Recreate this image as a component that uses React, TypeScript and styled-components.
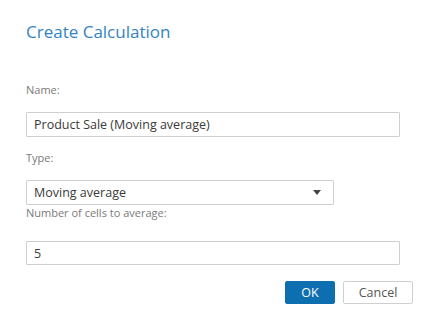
import React from "react";
import styled, { createGlobalStyle } from "styled-components";

const Global = createGlobalStyle`
  html, body { margin: 0; padding: 0; background: #fff; }
  body { font-family: "Open Sans", Lato, sans-serif; }
  * { box-sizing: border-box; }
`;

const Dialog = styled.div`
  width: 427px;
  height: 316px;
  padding: 22px 14px 0 26px;
  display: flex;
  flex-direction: column;
`;

const Title = styled.h1`
  margin: 0;
  font-size: 17px;
  line-height: 20px;
  font-weight: 400;
  color: #3483c4;
`;

const Label = styled.div<{ $top: number }>`
  margin-top: ${(p) => p.$top}px;
  font-size: 11px;
  line-height: 12px;
  color: #7a7a7a;
`;

const Field = styled.div<{ $top: number; $width: number; $height?: number }>`
  margin-top: ${(p) => p.$top}px;
  width: ${(p) => p.$width}px;
  height: ${(p) => p.$height ?? 25}px;
  flex: none;
  border: 1px solid #cfcfcf;
  border-radius: 1px;
  display: flex;
  align-items: center;
  justify-content: space-between;
  padding: 0 12px 0 7px;
  font-size: 12.5px;
  color: #3a3a3a;
`;

const Caret = styled.span`
  width: 0;
  height: 0;
  border-left: 4px solid transparent;
  border-right: 4px solid transparent;
  border-top: 5px solid #444;
`;

const Actions = styled.div`
  margin-top: 16px;
  display: flex;
  justify-content: flex-end;
  gap: 8px;
`;

const Button = styled.button<{ $primary?: boolean; $width: number }>`
  width: ${(p) => p.$width}px;
  height: 23px;
  font-family: inherit;
  font-size: 12.5px;
  padding: 0;
  border-radius: 2px;
  border: 1px solid ${(p) => (p.$primary ? "#0e6fb0" : "#cfcfcf")};
  background: ${(p) => (p.$primary ? "#0e6fb0" : "#fff")};
  color: ${(p) => (p.$primary ? "#fff" : "#555")};
`;

export default function App() {
  return (
    <>
      <Global />
      <Dialog>
        <Title>Create Calculation</Title>
        <Label $top={42}>Name:</Label>
        <Field $top={16} $width={374}>Product Sale (Moving average)</Field>
        <Label $top={15}>Type:</Label>
        <Field $top={16} $width={308}>
          <span>Moving average</span>
          <Caret />
        </Field>
        <Label $top={2}>Number of cells to average:</Label>
        <Field $top={22} $width={374} $height={24}>5</Field>
        <Actions>
          <Button $primary $width={50}>OK</Button>
          <Button $width={70}>Cancel</Button>
        </Actions>
      </Dialog>
    </>
  );
}
